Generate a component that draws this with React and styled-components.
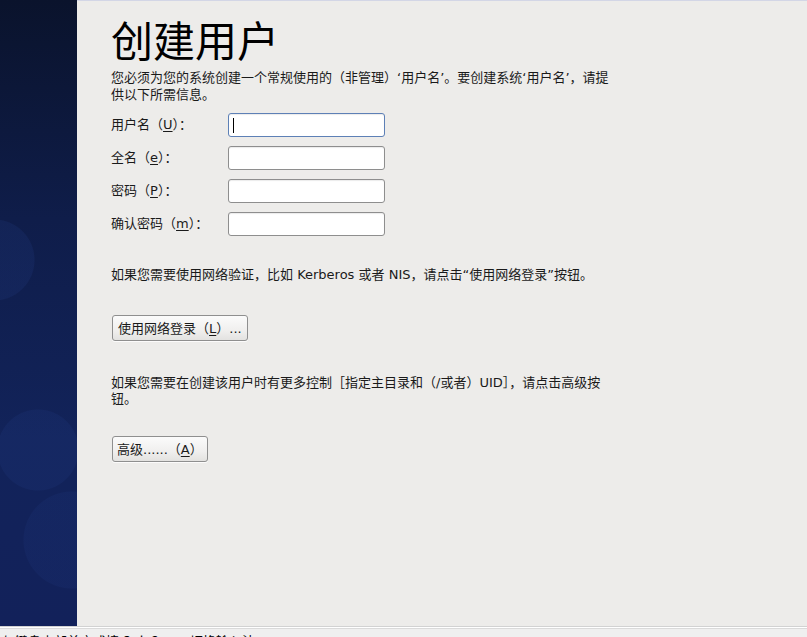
import React from "react";
import styled, { createGlobalStyle } from "styled-components";

const GlobalStyle = createGlobalStyle`
  html, body {
    margin: 0;
    padding: 0;
    background: #edecea;
  }
  #root {
    height: 637px;
  }
`;

const FONT = `"DejaVu Sans", "Noto Sans CJK SC", sans-serif`;

const Screen = styled.div`
  display: grid;
  grid-template-columns: 77px 1fr;
  grid-template-rows: 1fr 11px;
  width: 807px;
  height: 637px;
  overflow: hidden;
  font-family: ${FONT};
  color: #1a1a1a;
`;

const Sidebar = styled.div`
  background:
    radial-gradient(circle at -6px 260px, rgba(40, 70, 150, 0.16) 0 40px, transparent 41px),
    radial-gradient(circle at 38px 450px, rgba(40, 70, 150, 0.14) 0 40px, transparent 41px),
    radial-gradient(circle at 72px 540px, rgba(40, 70, 150, 0.12) 0 48px, transparent 49px),
    linear-gradient(180deg, #0a132c 0%, #0f1d4a 35%, #12235a 70%, #12215a 100%);
`;

const Main = styled.div`
  border-top: 1px solid #d3d6e6;
  padding: 0 0 0 34px;
  display: flex;
  flex-direction: column;
  align-items: flex-start;
`;

const Title = styled.h1`
  margin: 12px 0 0 0;
  font-family: "Noto Sans CJK SC", sans-serif;
  font-size: 42px;
  font-weight: 400;
  line-height: 52px;
  color: #000;
`;

const Para = styled.p`
  margin: ${(p) => p.$mt || 0}px 0 0 0;
  width: 500px;
  font-size: 13px;
  line-height: 16.5px;
`;

const Form = styled.div`
  margin-top: 10px;
  display: grid;
  grid-template-columns: 117px 157px;
  row-gap: 9px;
  align-items: center;
`;

const Label = styled.label`
  font-size: 13px;
  line-height: 16px;
  u {
    text-decoration: underline;
    text-underline-offset: 2px;
  }
`;

const Input = styled.div`
  height: 24px;
  box-sizing: border-box;
  border: 1px solid ${(p) => (p.$focused ? "#5d80b6" : "#8e8e8e")};
  border-radius: 3px;
  background: #fff;
  box-shadow: inset 0 1px 1px rgba(0, 0, 0, 0.08);
  position: relative;
`;

const Caret = styled.span`
  position: absolute;
  left: 4px;
  top: 4px;
  width: 1px;
  height: 15px;
  background: #000;
`;

const Button = styled.button`
  margin-top: ${(p) => p.$mt}px;
  margin-left: 1px;
  height: 26px;
  padding: 0 ${(p) => p.$px || 5}px;
  font-family: ${FONT};
  font-size: 13px;
  color: #1a1a1a;
  border: 1px solid #8f8f8f;
  border-radius: 3px;
  background: linear-gradient(180deg, #fbfbfb 0%, #f0efee 60%, #e3e2e0 100%);
  box-shadow: 0 1px 0 rgba(255, 255, 255, 0.8);
  u {
    text-decoration: underline;
    text-underline-offset: 2px;
  }
`;

const StatusBar = styled.div`
  grid-column: 1 / -1;
  border-top: 1px solid #d2d2d2;
  box-shadow: inset 0 1px 0 #ffffff, inset 0 2px 0 #dadada;
  background: #efefef;
  font-family: "Noto Sans CJK SC", sans-serif;
  font-size: 13px;
  line-height: 16px;
  padding: 6px 0 0 2px;
  overflow: hidden;
  white-space: nowrap;
  color: #000;
`;

const fields = [
  { label: "用户名", key: "U", focused: true },
  { label: "全名", key: "e" },
  { label: "密码", key: "P" },
  { label: "确认密码", key: "m" },
];

export default function App() {
  return (
    <>
      <GlobalStyle />
      <Screen>
        <Sidebar />
        <Main>
          <Title>创建用户</Title>
          <Para $mt={5}>
            您必须为您的系统创建一个常规使用的（非管理）‘用户名’。要创建系统‘用户名’，请提供以下所需信息。
          </Para>
          <Form>
            {fields.map((f) => (
              <React.Fragment key={f.key}>
                <Label>
                  {f.label}（<u>{f.key}</u>）：
                </Label>
                <Input $focused={f.focused}>{f.focused && <Caret />}</Input>
              </React.Fragment>
            ))}
          </Form>
          <Para $mt={31}>
            如果您需要使用网络验证，比如 Kerberos 或者 NIS，请点击“使用网络登录”按钮。
          </Para>
          <Button $mt={31}>
            使用网络登录（<u>L</u>）...
          </Button>
          <Para $mt={34}>
            如果您需要在创建该用户时有更多控制［指定主目录和（/或者）UID］，请点击高级按钮。
          </Para>
          <Button $mt={28} $px={4}>
            高级......（<u>A</u>）
          </Button>
        </Main>
        <StatusBar>与键盘中部单方式接 Ctrl+Space 切换输入法</StatusBar>
      </Screen>
    </>
  );
}
